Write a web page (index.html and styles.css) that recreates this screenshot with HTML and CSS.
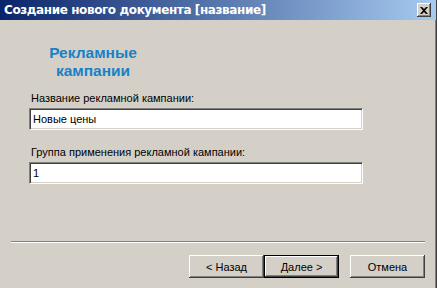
FILE: index.html
```html
<!DOCTYPE html>
<html>
<head>
<meta charset="utf-8">
<link rel="stylesheet" href="styles.css">
</head>
<body>
<div class="window">
  <div class="titlebar">
    <span class="title">Создание нового документа [название]</span>
    <button class="close" aria-label="Закрыть">
      <svg width="8" height="7" viewBox="0 0 8 7"><path d="M0 0h2l2 2 2-2h2L5 3.5 8 7H6L4 5 2 7H0l3-3.5z" fill="#000"/></svg>
    </button>
  </div>
  <div class="body">
    <div class="heading">Рекламные<br>кампании</div>
    <label class="label">Название рекламной кампании:</label>
    <div class="field">Новые цены</div>
    <label class="label second">Группа применения рекламной кампании:</label>
    <div class="field">1</div>
    <div class="spacer"></div>
    <div class="separator"></div>
    <div class="buttons">
      <button class="btn">&lt; Назад</button>
      <button class="btn default">Далее &gt;</button>
      <button class="btn cancel">Отмена</button>
    </div>
  </div>
</div>
</body>
</html>
```
FILE: styles.css
```css
html, body {
  margin: 0;
  padding: 0;
  background: #d4d0c8;
}
body {
  width: 437px;
  height: 288px;
  overflow: hidden;
  font-family: "Liberation Sans", Arial, sans-serif;
  font-size: 11px;
  color: #000;
}
.window {
  height: 288px;
  display: flex;
  flex-direction: column;
  box-sizing: border-box;
  border-right: 1px solid #404040;
  box-shadow: inset -1px 0 0 #808080;
}
.titlebar {
  height: 20px;
  flex: none;
  display: flex;
  align-items: center;
  justify-content: space-between;
  padding: 0 5px 0 4px;
  background: linear-gradient(to right, #0a246a, #a6caf0);
}
.title {
  color: #fff;
  font-weight: bold;
  font-size: 12px;
  font-family: "DejaVu Sans", Verdana, sans-serif;
  letter-spacing: -0.4px;
  white-space: nowrap;
}
.close {
  width: 14px;
  height: 14px;
  padding: 0;
  margin: 0;
  background: #d4d0c8;
  border: none;
  box-shadow: inset -1px -1px 0 #404040, inset 1px 1px 0 #fff, inset -2px -2px 0 #808080;
  display: flex;
  align-items: center;
  justify-content: center;
}
.body {
  flex: 1;
  display: flex;
  flex-direction: column;
  padding: 0 0 10px 0;
}
.heading {
  width: 186px;
  text-align: center;
  color: #1682c8;
  font-weight: bold;
  font-size: 15.5px;
  line-height: 18px;
  margin-top: 24px;
}
.label {
  display: block;
  margin: 12px 0 0 31px;
  line-height: 13px;
}
.label.second {
  margin-top: 16px;
}
.field {
  margin: 3px 0 0 29px;
  width: 334px;
  height: 22px;
  box-sizing: border-box;
  background: #fff;
  border-top: 1px solid #808080;
  border-left: 1px solid #808080;
  border-right: 1px solid #fff;
  border-bottom: 1px solid #fff;
  box-shadow: inset 1px 1px 0 #404040, inset -1px -1px 0 #d4d0c8;
  padding: 3px 3px;
  line-height: 14px;
}
.spacer {
  flex: 1;
}
.separator {
  margin: 0 11px;
  height: 1px;
  background: #808080;
  border-bottom: 1px solid #fff;
}
.buttons {
  display: flex;
  justify-content: flex-end;
  margin: 12px 11px 0 0;
}
.btn {
  width: 75px;
  height: 23px;
  margin: 0;
  padding: 0;
  background: #d4d0c8;
  font-family: "Liberation Sans", Arial, sans-serif;
  font-size: 11px;
  color: #000;
  border: none;
  box-shadow: inset -1px -1px 0 #404040, inset 1px 1px 0 #fff, inset -2px -2px 0 #808080;
}
.btn.default {
  border: 1px solid #000;
}
.btn.cancel {
  margin-left: 11px;
}
```
